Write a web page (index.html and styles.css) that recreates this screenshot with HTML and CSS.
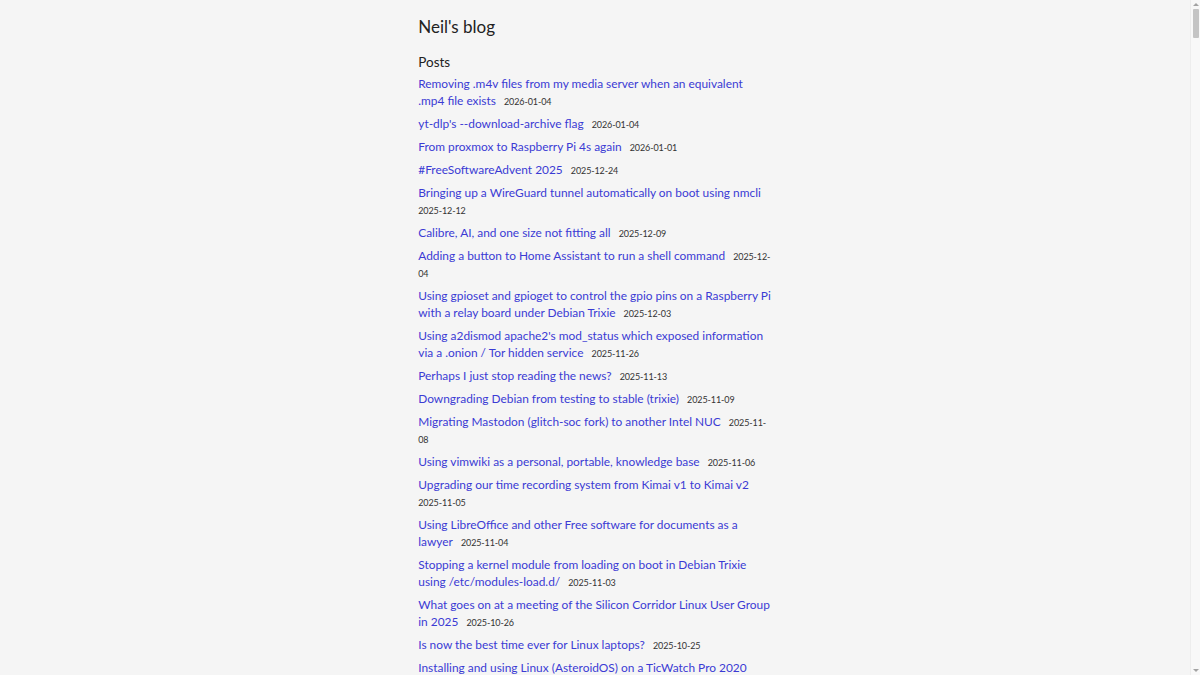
FILE: index.html
```html
<!DOCTYPE html>
<html lang="en">
<head>
    <meta charset="UTF-8">
    <meta name="viewport" content="width=device-width, initial-scale=1.0">
    <title>Neil's blog</title>
    <link rel="stylesheet" href="styles.css">
</head>
<body>
    <div class="wrapper">
        <header>
            <h1 class="site-title">Neil's blog</h1>
        </header>

        <main>
            <h2>Posts</h2>
            <ul class="posts">
                <li><a href="#">Removing .m4v files from my media server when an equivalent .mp4 file exists</a> <span class="date">2026-01-04</span></li>
                <li><a href="#">yt-dlp's --download-archive flag</a> <span class="date">2026-01-04</span></li>
                <li><a href="#">From proxmox to Raspberry Pi 4s again</a> <span class="date">2026-01-01</span></li>
                <li><a href="#">#FreeSoftwareAdvent 2025</a> <span class="date">2025-12-24</span></li>
                <li><a href="#">Bringing up a WireGuard tunnel automatically on boot using nmcli</a> <span class="date">2025-12-12</span></li>
                <li><a href="#">Calibre, AI, and one size not fitting all</a> <span class="date">2025-12-09</span></li>
                <li><a href="#">Adding a button to Home Assistant to run a shell command</a> <span class="date">2025-12-04</span></li>
                <li><a href="#">Using gpioset and gpioget to control the gpio pins on a Raspberry Pi with a relay board under Debian Trixie</a> <span class="date">2025-12-03</span></li>
                <li><a href="#">Using a2dismod apache2's mod_status which exposed information via a .onion / Tor hidden service</a> <span class="date">2025-11-26</span></li>
                <li><a href="#">Perhaps I just stop reading the news?</a> <span class="date">2025-11-13</span></li>
                <li><a href="#">Downgrading Debian from testing to stable (trixie)</a> <span class="date">2025-11-09</span></li>
                <li><a href="#">Migrating Mastodon (glitch-soc fork) to another Intel NUC</a> <span class="date">2025-11-08</span></li>
                <li><a href="#">Using vimwiki as a personal, portable, knowledge base</a> <span class="date">2025-11-06</span></li>
                <li><a href="#">Upgrading our time recording system from Kimai v1 to Kimai v2</a> <span class="date">2025-11-05</span></li>
                <li><a href="#">Using LibreOffice and other Free software for documents as a lawyer</a> <span class="date">2025-11-04</span></li>
                <li><a href="#">Stopping a kernel module from loading on boot in Debian Trixie using /etc/modules-load.d/</a> <span class="date">2025-11-03</span></li>
                <li><a href="#">What goes on at a meeting of the Silicon Corridor Linux User Group in 2025</a> <span class="date">2025-10-26</span></li>
                <li><a href="#">Is now the best time ever for Linux laptops?</a> <span class="date">2025-10-25</span></li>
                <li><a href="#">Installing and using Linux (AsteroidOS) on a TicWatch Pro 2020</a> <span class="date">2025-10-24</span></li>
            </ul>
        </main>
    </div>

    <!-- browser scrollbar, drawn since the page is photographed without one -->
    <div class="scrollbar">
        <span class="arrow up"></span>
        <span class="thumb"></span>
        <span class="track"></span>
        <span class="arrow down"></span>
    </div>
</body>
</html>
```

FILE: styles.css
```css
body {
    margin: 0;
    padding-right: 10px;
    background: #f5f5f5;
    color: #222;
    font-family: Lato, "Open Sans", sans-serif;
    font-size: 11.9px;
    line-height: 17px;
}

.wrapper {
    max-width: 353.5px;
    margin: 0 auto;
    padding: 16px 0 40px;
}

.site-title {
    margin: 0 0 14px;
    font-size: 17px;
    font-weight: 400;
    line-height: 22px;
}

h2 {
    margin: 0 0 3px;
    font-size: 13.5px;
    font-weight: 400;
    line-height: 20px;
}

.posts {
    list-style: none;
    margin: 0;
    padding: 0;
}

.posts li {
    margin-bottom: 6px;
}

.posts a {
    color: #3b3bd4;
    text-decoration: none;
    margin-right: 5px;
}

.date {
    font-size: 9px;
    line-height: 10px;
    letter-spacing: -0.1px;
    color: #333;
}

.scrollbar {
    position: fixed;
    top: 0;
    right: 0;
    bottom: 0;
    width: 10px;
    display: flex;
    flex-direction: column;
    align-items: center;
    background: #f8f8f8;
    border-left: 1px solid #ededed;
    box-sizing: border-box;
}
.scrollbar .arrow {
    width: 0;
    height: 0;
    margin: 3px 0;
    border-left: 3px solid transparent;
    border-right: 3px solid transparent;
}
.scrollbar .up {
    border-bottom: 3px solid #a3a3a3;
}
.scrollbar .down {
    border-top: 3px solid #a3a3a3;
}
.scrollbar .thumb {
    width: 6px;
    height: 29px;
    background: #c4c4c4;
    border-radius: 1px;
}
.scrollbar .track {
    flex: 1;
}
```
